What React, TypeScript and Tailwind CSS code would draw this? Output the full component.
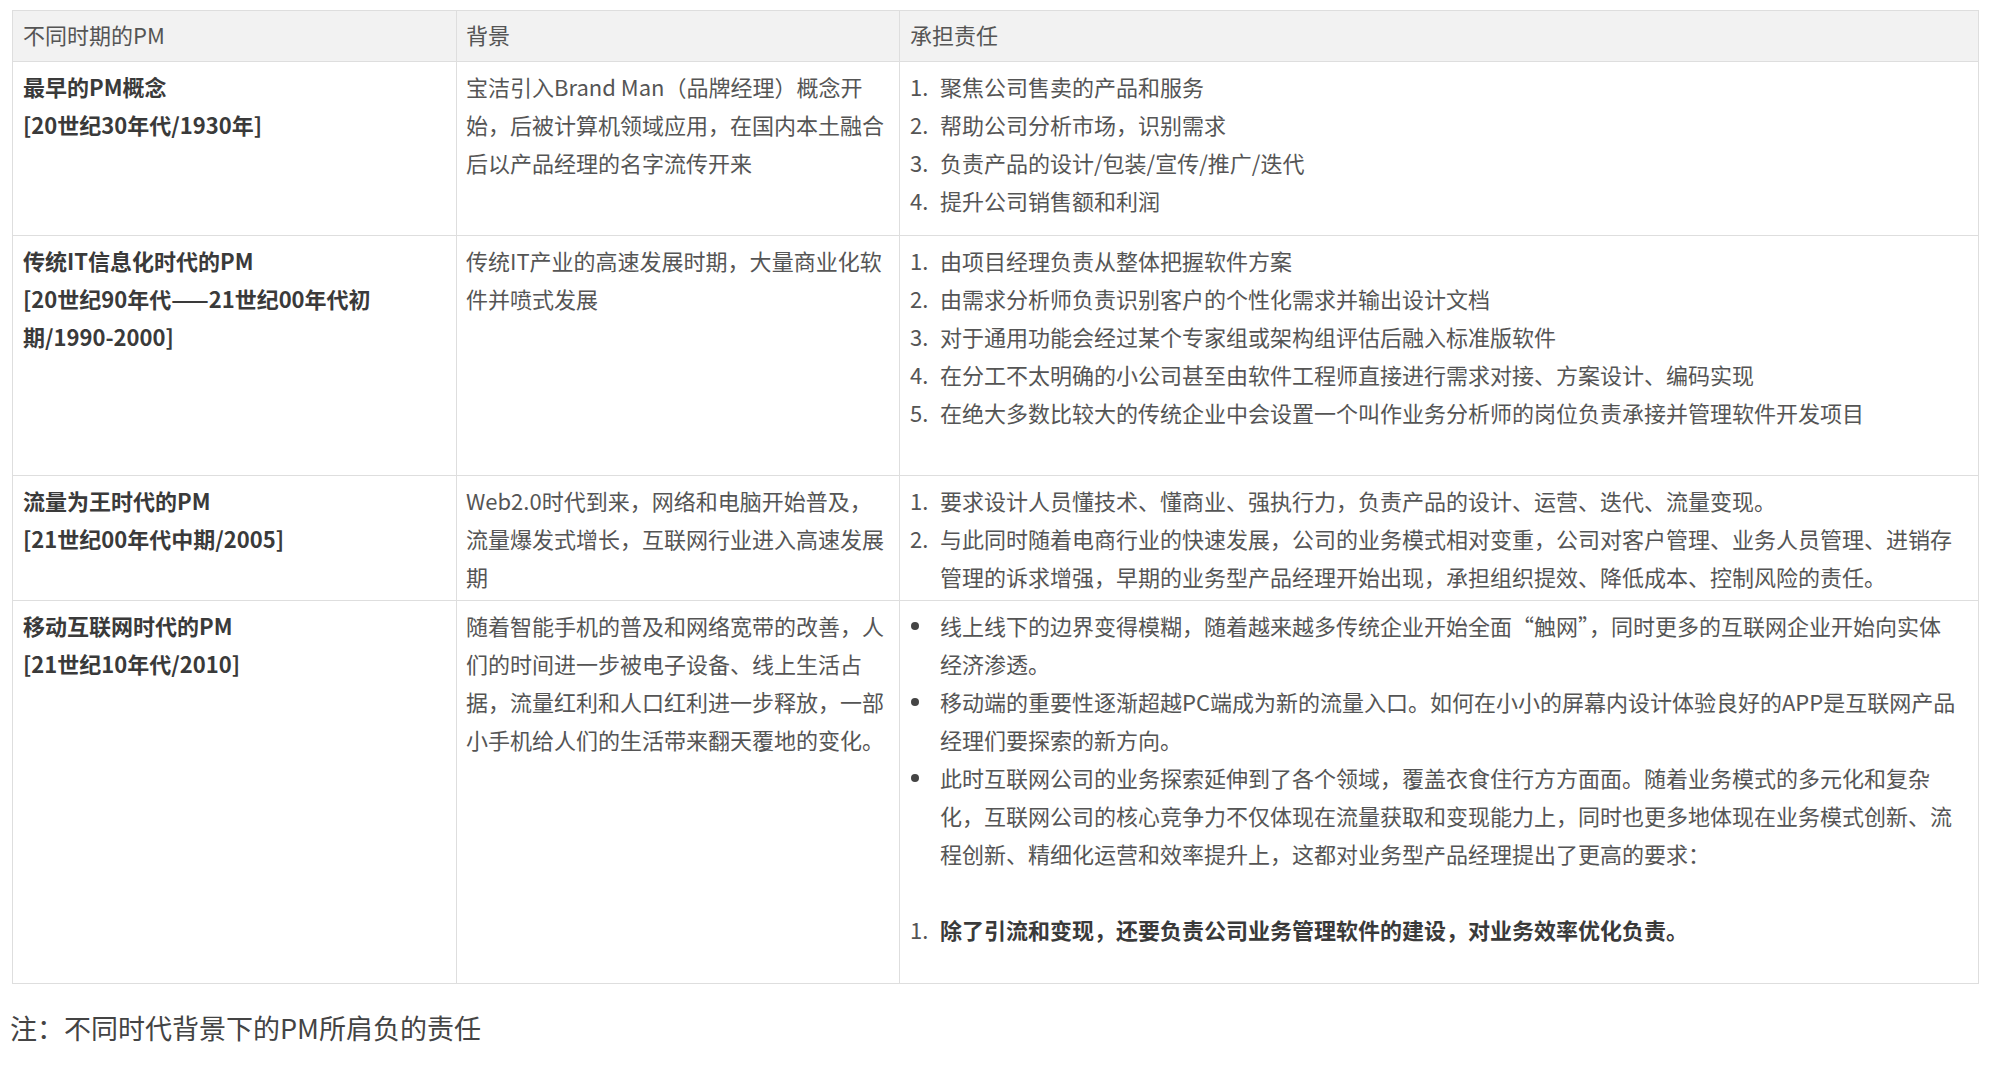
import React from "react";

const L = ({ children }: { children: React.ReactNode }) => (
  <div className="whitespace-nowrap">{children}</div>
);

function NumItem({ n, children, bold }: { n: number; children: React.ReactNode; bold?: boolean }) {
  return (
    <div className="flex">
      <span className="w-[30px] shrink-0">{n}.</span>
      <div className={bold ? "font-bold text-[#3a3a3a]" : ""}>{children}</div>
    </div>
  );
}

function Bullet({ children }: { children: React.ReactNode }) {
  return (
    <div className="flex">
      <span className="w-[30px] shrink-0 pt-[16px] pl-[1px]">
        <span className="block h-[8px] w-[8px] rounded-full bg-[#444]" />
      </span>
      <div>{children}</div>
    </div>
  );
}

const c1 = "border-r border-b border-[#dedede] pl-[10px] pr-[10px] pt-[5px] font-bold text-[#3a3a3a]";
const c2 = "border-r border-b border-[#dedede] pl-[9px] pr-[9px] pt-[5px]";
const c3 = "border-r border-b border-[#dedede] pl-[10px] pr-[8px] pt-[5px]";

export default function App() {
  return (
    <div className="min-h-screen bg-white font-['Noto_Sans_CJK_SC','Noto_Sans',sans-serif] text-[22px] leading-[38px] text-[#555]">
      <div className="pl-[12px] pt-[10px]">
        <div className="grid w-[1967px] grid-cols-[444px_443px_1079px] grid-rows-[51px_174px_240px_125px_383px] border-l border-t border-[#dedede]">
          {/* header */}
          <div className="border-r border-b border-[#dedede] bg-[#f2f2f2] pl-[10px] pt-[4px]">不同时期的PM</div>
          <div className="border-r border-b border-[#dedede] bg-[#f2f2f2] pl-[9px] pt-[4px]">背景</div>
          <div className="border-r border-b border-[#dedede] bg-[#f2f2f2] pl-[10px] pt-[4px]">承担责任</div>

          {/* row 1 */}
          <div className={c1}>
            <L>最早的PM概念</L>
            <L>[20世纪30年代/1930年]</L>
          </div>
          <div className={c2}>
            <L>宝洁引入Brand Man（品牌经理）概念开</L>
            <L>始，后被计算机领域应用，在国内本土融合</L>
            <L>后以产品经理的名字流传开来</L>
          </div>
          <div className={c3}>
            <NumItem n={1}>聚焦公司售卖的产品和服务</NumItem>
            <NumItem n={2}>帮助公司分析市场，识别需求</NumItem>
            <NumItem n={3}>负责产品的设计/包装/宣传/推广/迭代</NumItem>
            <NumItem n={4}>提升公司销售额和利润</NumItem>
          </div>

          {/* row 2 */}
          <div className={c1}>
            <L>传统IT信息化时代的PM</L>
            <L>[20世纪90年代——21世纪00年代初</L>
            <L>期/1990-2000]</L>
          </div>
          <div className={c2}>
            <L>传统IT产业的高速发展时期，大量商业化软</L>
            <L>件并喷式发展</L>
          </div>
          <div className={c3}>
            <NumItem n={1}>由项目经理负责从整体把握软件方案</NumItem>
            <NumItem n={2}>由需求分析师负责识别客户的个性化需求并输出设计文档</NumItem>
            <NumItem n={3}>对于通用功能会经过某个专家组或架构组评估后融入标准版软件</NumItem>
            <NumItem n={4}>在分工不太明确的小公司甚至由软件工程师直接进行需求对接、方案设计、编码实现</NumItem>
            <NumItem n={5}>在绝大多数比较大的传统企业中会设置一个叫作业务分析师的岗位负责承接并管理软件开发项目</NumItem>
          </div>

          {/* row 3 */}
          <div className={c1}>
            <L>流量为王时代的PM</L>
            <L>[21世纪00年代中期/2005]</L>
          </div>
          <div className={c2}>
            <L>Web2.0时代到来，网络和电脑开始普及，</L>
            <L>流量爆发式增长，互联网行业进入高速发展</L>
            <L>期</L>
          </div>
          <div className={c3}>
            <NumItem n={1}>要求设计人员懂技术、懂商业、强执行力，负责产品的设计、运营、迭代、流量变现。</NumItem>
            <NumItem n={2}>
              <L>与此同时随着电商行业的快速发展，公司的业务模式相对变重，公司对客户管理、业务人员管理、进销存</L>
              <L>管理的诉求增强，早期的业务型产品经理开始出现，承担组织提效、降低成本、控制风险的责任。</L>
            </NumItem>
          </div>

          {/* row 4 */}
          <div className={c1}>
            <L>移动互联网时代的PM</L>
            <L>[21世纪10年代/2010]</L>
          </div>
          <div className={c2}>
            <L>随着智能手机的普及和网络宽带的改善，人</L>
            <L>们的时间进一步被电子设备、线上生活占</L>
            <L>据，流量红利和人口红利进一步释放，一部</L>
            <L>小手机给人们的生活带来翻天覆地的变化。</L>
          </div>
          <div className={c3}>
            <Bullet>
              <L>线上线下的边界变得模糊，随着越来越多传统企业开始全面“触网”，同时更多的互联网企业开始向实体</L>
              <L>经济渗透。</L>
            </Bullet>
            <Bullet>
              <L>移动端的重要性逐渐超越PC端成为新的流量入口。如何在小小的屏幕内设计体验良好的APP是互联网产品</L>
              <L>经理们要探索的新方向。</L>
            </Bullet>
            <Bullet>
              <L>此时互联网公司的业务探索延伸到了各个领域，覆盖衣食住行方方面面。随着业务模式的多元化和复杂</L>
              <L>化，互联网公司的核心竞争力不仅体现在流量获取和变现能力上，同时也更多地体现在业务模式创新、流</L>
              <L>程创新、精细化运营和效率提升上，这都对业务型产品经理提出了更高的要求：</L>
            </Bullet>
            <div className="h-[38px]" />
            <NumItem n={1} bold>
              除了引流和变现，还要负责公司业务管理软件的建设，对业务效率优化负责。
            </NumItem>
          </div>
        </div>
      </div>
      <div className="mt-[25px] pl-[10px] text-[27px] leading-[38px] text-[#444]">
        注：不同时代背景下的PM所肩负的责任
      </div>
    </div>
  );
}
